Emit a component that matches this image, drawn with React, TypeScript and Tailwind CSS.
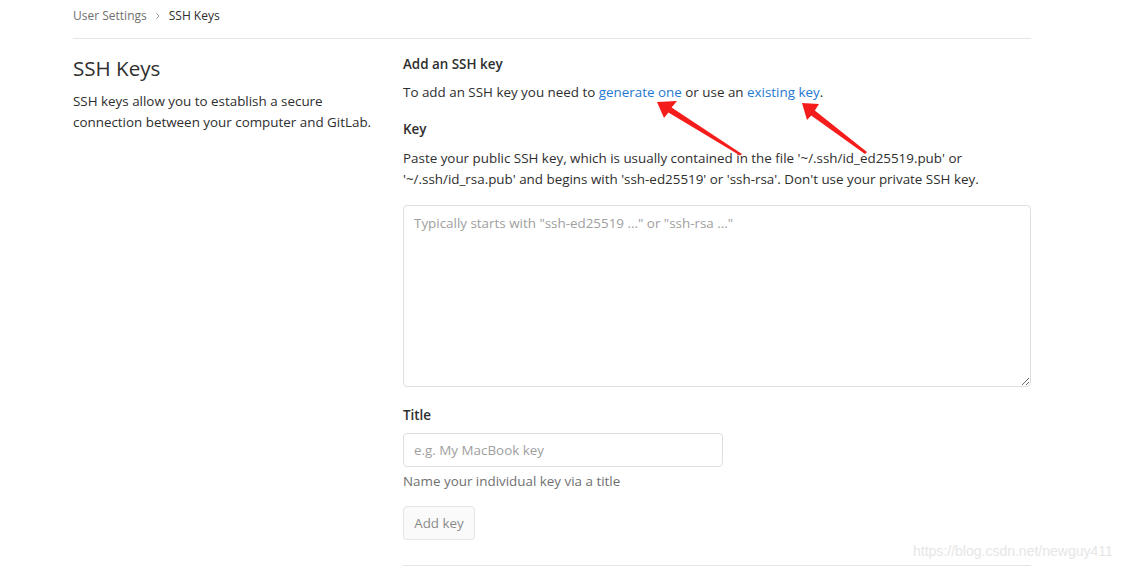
import React from "react";

const font = { fontFamily: '"Segoe UI", "Open Sans", "Noto Sans", sans-serif' };

export default function App() {
  return (
    <div className="relative w-[1148px] h-[570px] bg-white overflow-hidden text-[#2e2e2e]" style={font}>
      <div className="ml-[73px] w-[958px]">
        <div className="h-[39px] flex items-center gap-[7px] text-[12px] border-b border-[#e5e5e5] pb-[6px]">
          <span className="text-[#707070]">User Settings</span>
          <svg width="8" height="8" viewBox="0 0 8 8" className="text-[#999]">
            <path d="M2.5 1.5 L5 4 L2.5 6.5" fill="none" stroke="currentColor" strokeWidth="1" />
          </svg>
          <span className="text-[#2e2e2e]">SSH Keys</span>
        </div>
        <div className="flex">
          <div className="w-[330px] pt-[14px]">
            <h4 className="text-[20.6px] leading-[30px] text-[#2e2e2e]">SSH Keys</h4>
            <p className="mt-[8px] text-[13.4px] leading-[21px] w-[310px]">
              SSH keys allow you to establish a secure connection between your computer and GitLab.
            </p>
          </div>
          <div className="w-[628px] pt-[14px]">
            <h5 className="text-[13.4px] font-semibold leading-[22px]">Add an SSH key</h5>
            <p className="mt-[7px] text-[13.4px] leading-[21px]">
              To add an SSH key you need to <span className="text-[#1f78d1]">generate one</span> or use an{" "}
              <span className="text-[#1f78d1]">existing key</span>.
            </p>
            <div className="mt-[16px] text-[13.4px] font-semibold leading-[21px]">Key</div>
            <p className="mt-[8px] text-[13.4px] leading-[21px]">
              Paste your public SSH key, which is usually contained in the file '~/.ssh/id_ed25519.pub' or
              '~/.ssh/id_rsa.pub' and begins with 'ssh-ed25519' or 'ssh-rsa'. Don't use your private SSH key.
            </p>
            <textarea
              className="mt-[15px] block w-[628px] h-[182px] border border-[#dfdfdf] rounded-[4px] px-[10px] py-[7px] text-[13.4px] leading-[20px] placeholder:text-[#a0a0a0] outline-none"
              style={font}
              placeholder={'Typically starts with "ssh-ed25519 ..." or "ssh-rsa ..."'}
            />
            <div className="mt-[18px] text-[13.4px] font-semibold leading-[21px]">Title</div>
            <input
              className="mt-[7px] block w-[320px] h-[34px] border border-[#dfdfdf] rounded-[4px] px-[10px] text-[13.4px] placeholder:text-[#a0a0a0] outline-none"
              style={font}
              placeholder="e.g. My MacBook key"
            />
            <p className="mt-[4px] text-[13.4px] leading-[21px] text-[#707070]">Name your individual key via a title</p>
            <button
              className="mt-[14px] block w-[72px] h-[34px] border border-[#e5e5e5] rounded-[4px] bg-[#fafafa] text-[13.4px] text-[#8a8a8a]"
              style={font}
            >
              Add key
            </button>
            <div className="mt-[25px] border-t border-[#e5e5e5]" />
          </div>
        </div>
      </div>

      <svg className="absolute left-0 top-0 pointer-events-none" width="1148" height="570">
        <polygon points="657,102 677,101 671.6,107.5 742,154 740,155.5 668.4,112.5 664,118" fill="#f51c1c" />
        <polygon points="802,103 819,104 814.8,110.6 867,152 865,154 811.2,115.4 807,120" fill="#f51c1c" />
      </svg>

      <div
        className="absolute left-[913px] top-[541px] text-[14px] text-[#e6e6e6]"
        style={{ fontFamily: '"Liberation Sans", Arial, sans-serif' }}
      >
        https://blog.csdn.net/newguy411
      </div>
    </div>
  );
}
